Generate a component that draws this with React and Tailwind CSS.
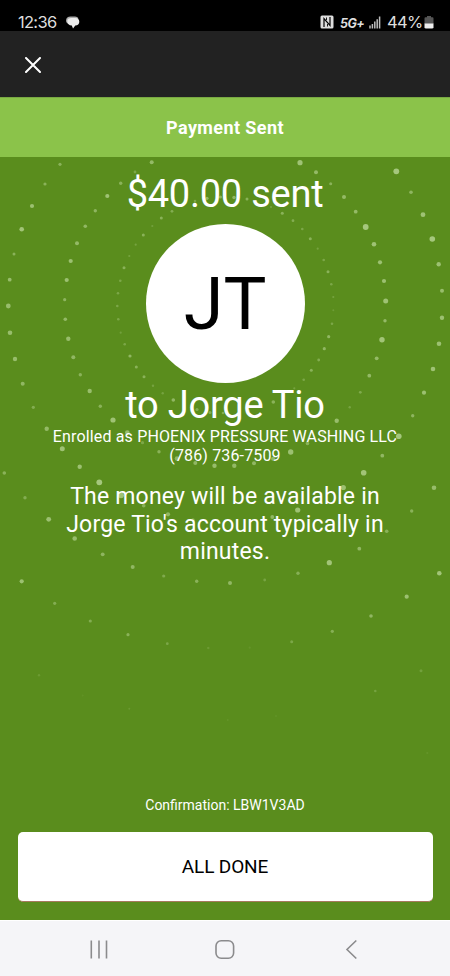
import React from 'react';

// [x, y, radius, opacity] of each dot in the circular pattern
const DOTS = [
  // inner ring
  [172, 211.3, 1.4, 0.3], [161.3, 218, 1.5, 0.35], [152.3, 226, 1.1, 0.18], [143.3, 235, 1.5, 0.35],
  [135.7, 244.7, 1.1, 0.2], [129.3, 256, 1.1, 0.2], [124, 267.7, 1.5, 0.35], [120.3, 280.7, 1.3, 0.25],
  [118, 293.3, 1.3, 0.25], [117.3, 306, 1.3, 0.25], [118.3, 319.3, 1.3, 0.25], [120.7, 332.7, 1.1, 0.18],
  [124.7, 344.3, 1.3, 0.25], [130, 356, 1.6, 0.4], [136.3, 367, 1.5, 0.35], [144, 376.7, 1.5, 0.35],
  [153, 385.7, 1.2, 0.2], [162.7, 393.3, 1.2, 0.2], [173.3, 400, 1.8, 0.4], [197, 409.5, 1.6, 0.3],
  [210, 412.5, 1.5, 0.3], [223, 413, 1.3, 0.3], [249, 411, 1.2, 0.2], [273.3, 402, 1.8, 0.35],
  [294.3, 388.3, 1.1, 0.2], [303.7, 379.7, 1.3, 0.25], [311.3, 370.3, 1.5, 0.35], [318.7, 360, 1.4, 0.3],
  [324.3, 348.7, 1.6, 0.4], [328.7, 336.7, 1.6, 0.4], [332, 323.7, 1.3, 0.25], [333.3, 310.3, 1, 0.15],
  [333.3, 297, 1.1, 0.2], [331.3, 284.3, 1.3, 0.25], [328, 271.7, 1.5, 0.35], [323.7, 260, 1.3, 0.25],
  [317.7, 248.7, 1.1, 0.2], [310.3, 238.7, 1.5, 0.35], [302.3, 229, 1.3, 0.25], [293, 220.7, 1.4, 0.3],
  [282.3, 213.3, 1.5, 0.35], [271, 207, 1.1, 0.2], [247, 199, 1.5, 0.35], [234, 197.5, 1.7, 0.4],
  [220.5, 197, 1.5, 0.35], [207, 198.3, 1.6, 0.4], [195, 201, 1.3, 0.25],
  // middle ring
  [135, 172, 1.4, 0.25], [120.7, 183.3, 1.7, 0.35], [107.3, 196, 2.1, 0.5], [95.3, 210.7, 1.7, 0.38],
  [85.3, 226.3, 1.8, 0.4], [77, 243.3, 2, 0.42], [70.7, 261, 2.1, 0.48], [66.7, 280, 2.1, 0.48],
  [64.7, 299.7, 1.6, 0.38], [65.3, 319.3, 1.8, 0.42], [68.3, 338.7, 2.2, 0.45], [73.3, 357.3, 2, 0.4],
  [80.3, 374.7, 1.7, 0.35], [89.7, 391, 2.2, 0.45], [100.3, 406.3, 1.7, 0.35], [113, 420, 2.6, 0.5],
  [127.3, 432.5, 2.3, 0.45], [142.5, 442.7, 1.6, 0.25], [159, 451.7, 1.7, 0.35], [177, 458.5, 2.3, 0.4],
  [195.3, 463, 2, 0.4], [214.5, 465.7, 2.2, 0.45], [234.3, 465.7, 2.2, 0.42], [254, 463.3, 2, 0.4],
  [273, 458.7, 2, 0.4], [290.7, 452, 2.7, 0.48], [307.5, 443.5, 1.8, 0.35], [323, 433, 1.5, 0.25],
  [336.7, 420.7, 2.2, 0.45], [349.7, 407.3, 1.2, 0.22], [360.3, 392.3, 1.4, 0.28], [369.3, 375.7, 1.9, 0.42],
  [376.7, 358.3, 1.9, 0.42], [382, 339.7, 2.7, 0.52], [385, 320.7, 1.7, 0.42], [385.7, 301, 2.5, 0.5],
  [384, 281, 2.1, 0.48], [380, 262.3, 2.1, 0.48], [374, 244.3, 2.3, 0.5], [365.7, 227, 2.9, 0.55],
  [355.7, 211.7, 1.9, 0.42], [344, 197, 2, 0.42], [330.7, 183.7, 1.5, 0.35], [316, 172.3, 2, 0.42],
  [300, 162.7, 2.6, 0.5], [151.7, 162.3, 2, 0.42],
  // outer ring
  [60, 164.3, 1.6, 0.35], [45, 184, 1.6, 0.35], [32, 206, 2.1, 0.48], [21.7, 229.3, 2.3, 0.52],
  [14, 254, 1.5, 0.35], [9.7, 279.7, 1.9, 0.45], [8.3, 306, 2.4, 0.45], [10, 332.7, 2.3, 0.45],
  [15, 359, 2.2, 0.45], [22.7, 383.7, 2, 0.4], [33.3, 407.3, 1.6, 0.3], [46.7, 428.7, 2.2, 0.42],
  [62.3, 448.7, 2.5, 0.5], [79.7, 466.7, 2.2, 0.48], [99.3, 482.3, 2.9, 0.55], [121, 495.3, 2.9, 0.5],
  [143.7, 505.7, 1.8, 0.35], [168, 514.3, 2.1, 0.4], [193, 520, 1.8, 0.3], [272.3, 517, 1.9, 0.4],
  [297.7, 510, 2.6, 0.5], [343.3, 487.5, 2.6, 0.48], [363.7, 472.7, 2.8, 0.52], [382.3, 455.7, 1.9, 0.4],
  [398.8, 436.2, 2.8, 0.55], [412.7, 415.7, 1.7, 0.38], [424, 392.7, 2.1, 0.48], [433, 369, 2.3, 0.5],
  [439, 343.7, 2.3, 0.48], [442, 317.7, 2.2, 0.48], [442, 290.7, 2, 0.45], [438.7, 264.3, 2.2, 0.48],
  [432.3, 239, 2.8, 0.55], [423, 214.7, 2.4, 0.5], [411, 192.3, 1.8, 0.38], [396.3, 171.3, 2.9, 0.55],
  // fading rings at the bottom
  [4.3, 473, 1.8, 0.35], [25, 497.7, 1.7, 0.3], [48.7, 519.3, 2.4, 0.48], [74.7, 538.5, 2.3, 0.45],
  [102.7, 554.3, 1.9, 0.38], [132.7, 567, 2, 0.4], [163.7, 576, 1.6, 0.28], [196.7, 581.3, 1.7, 0.35],
  [230, 583, 2, 0.4], [264.7, 580, 1.4, 0.22], [298, 573.3, 1.7, 0.32], [329.3, 562.7, 2.6, 0.52],
  [359.3, 548.7, 1.9, 0.4], [386.7, 531.3, 1.8, 0.35], [411.7, 511, 1.7, 0.35], [434, 487.7, 2.3, 0.45],
  [21.7, 581.3, 2.1, 0.48], [54.7, 603.3, 1.6, 0.3], [90.3, 621, 1.6, 0.3], [128, 634.7, 1.6, 0.35],
  [167.3, 643.7, 1.4, 0.25], [208.3, 648, 1.2, 0.13], [249.7, 647.7, 1.1, 0.08], [291.7, 641.7, 1.5, 0.25],
  [332.3, 631.3, 1.6, 0.32], [371, 616, 1.8, 0.4], [406.7, 596.7, 2.1, 0.48], [439.3, 573.3, 2.3, 0.52],
  [39, 675.3, 1.2, 0.13], [82.7, 695.5, 1, 0.05], [129.3, 708.7, 1, 0.12], [227.7, 720, 1, 0.07],
  [276, 716, 1, 0.06], [375.3, 691, 1.3, 0.2], [421, 670.7, 1.5, 0.18], [427.3, 753, 1.1, 0.08],
];

const StatusBar = () => (
  <div className="h-[31px] bg-black flex items-start justify-between pl-[18px] pr-[16px] pt-[12px] text-[#dedede]">
    <div className="flex items-center gap-[7px] h-5">
      <span className="w-[41px] whitespace-nowrap font-['Inter'] text-[16.5px] leading-5 tracking-[-0.7px]">12:36</span>
      <svg width="14" height="13" viewBox="0 0 14 13" className="mt-px">
        <path d="M0 4.5C0 1.8 2 .5 4.5 .5H9C11 .5 12 1.5 12.4 2.5L3 8C1 7.5 0 6.3 0 4.5Z" fill="#aaa" />
        <path d="M1.3 5C1.3 2.8 3 2 5.2 2H9.4C12 2 13.3 3.5 13.3 5.8C13.3 8.2 11.8 9.5 9.3 9.5L7 12.5L5.8 9.6C3 9.5 1.3 7.8 1.3 5Z" fill="#ededed" />
      </svg>
    </div>
    <div className="flex items-center h-5">
      <svg width="14" height="14" viewBox="0 0 14 14" className="mr-[6px]">
        <rect x="0.5" y="0.5" width="13" height="13" rx="1.5" fill="#dedede" />
        <path d="M4 12V3.5L10 10.5V2" fill="none" stroke="#000" strokeWidth="1.2" />
        <path d="M6.5 2.5V5M7.5 9V11.5" fill="none" stroke="#000" strokeWidth="0.9" />
      </svg>
      <span className="w-[25px] mr-[4px] mt-[3px] whitespace-nowrap font-['Inter'] text-[12.5px] leading-4 font-bold italic tracking-[-0.5px]">5G+</span>
      <svg width="12" height="13" viewBox="0 0 12 13" className="mr-[6px]">
        <path d="M1 9.5V12.5M3.4 8V12.5M5.8 5.5V12.5M8.2 3.2V12.5M10.6 .5V12.5" fill="none" stroke="#bdbdbd" strokeWidth="1.5" />
      </svg>
      <span className="w-[34px] mr-[3px] whitespace-nowrap font-['Inter'] text-[16.5px] leading-5 tracking-[-0.7px]">44%</span>
      <svg width="10" height="13" viewBox="0 0 10 13" className="mt-px">
        <path d="M3 0H7V1.2H8.5Q9.5 1.2 9.5 2.5V8H.5V2.5Q.5 1.2 1.5 1.2H3Z" fill="#555" />
        <path d="M.5 7.5H9.5V11.2Q9.5 12.5 8 12.5H2Q.5 12.5 .5 11.2Z" fill="#eee" />
      </svg>
    </div>
  </div>
);

const Header = () => (
  <div className="h-[66px] bg-[#222222] flex items-center pl-[25px]">
    <button aria-label="Close" className="mt-px">
      <svg width="16" height="16" viewBox="0 0 16 16" fill="none" stroke="#fff" strokeWidth="2" strokeLinecap="round">
        <path d="M1 1L15 15M15 1L1 15" />
      </svg>
    </button>
  </div>
);

const NavBar = () => (
  <div className="h-[56px] bg-[#f5f5f8] border-t border-white flex items-center">
    <svg width="450" height="55" viewBox="0 0 450 55" fill="none" stroke="#8b8b8d" strokeWidth="1.6">
      <path d="M91.3 19.5V37.5M99 19.5V37.5M106.5 19.5V37.5" />
      <rect x="216" y="19.7" width="17.6" height="17.6" rx="5.2" />
      <path d="M356.3 19.5L347 28.5L356.3 37.5" />
    </svg>
  </div>
);

const App = () => {
  return (
    <div className="w-[450px] h-[976px] flex flex-col overflow-hidden bg-[#5a8d1d] font-['Roboto',sans-serif]">
      <StatusBar />
      <Header />
      <div className="h-[60px] bg-[#8bc34a] border-t border-[#79a943] flex items-center justify-center text-white text-[18px] font-bold">
        <h1 className="tracking-[0.4px]">Payment Sent</h1>
      </div>

      <main className="relative flex-1 flex flex-col items-center text-white text-center">
        {/* Dotted rings behind the text */}
        <svg className="absolute inset-0" width="450" height="763" viewBox="0 157 450 763">
          {DOTS.map(([x, y, r, o]) => (
            <circle key={`${x}-${y}`} cx={x} cy={y} r={r} fill="#e4f8cc" opacity={o} />
          ))}
        </svg>

        <div className="relative flex-1 w-full flex flex-col items-center">
          <p className="mt-[14px] text-[38px] leading-[46px] tracking-[-0.25px]">$40.00 sent</p>
          <div className="mt-[7px] size-[159px] shrink-0 rounded-full bg-white text-black flex items-center justify-center text-[72px]">
            <span className="pt-[3px]">JT</span>
          </div>
          <p className="text-[38px] leading-[44px] tracking-[-0.2px]">to Jorge Tio</p>
          <p className="text-[16px] leading-[19px] tracking-[0.15px]">Enrolled as PHOENIX PRESSURE WASHING LLC</p>
          <p className="text-[16px] leading-[19px] tracking-[0.15px]">(786) 736-7509</p>
          <p className="mt-[18px] w-[340px] text-[23px] leading-[27.5px] tracking-[0.2px]">
            The money will be available in Jorge Tio's account typically in minutes.
          </p>
          <p className="mt-auto mb-[18px] text-[14px] leading-[18px]">Confirmation: LBW1V3AD</p>
          <button className="w-[415px] h-[70px] mb-[18px] pt-[2px] shrink-0 rounded-[5px] bg-white border-b border-[#a5795d] text-black text-[19px] tracking-[-0.15px]">
            ALL DONE
          </button>
        </div>
      </main>

      <NavBar />
    </div>
  );
};

export default App;
